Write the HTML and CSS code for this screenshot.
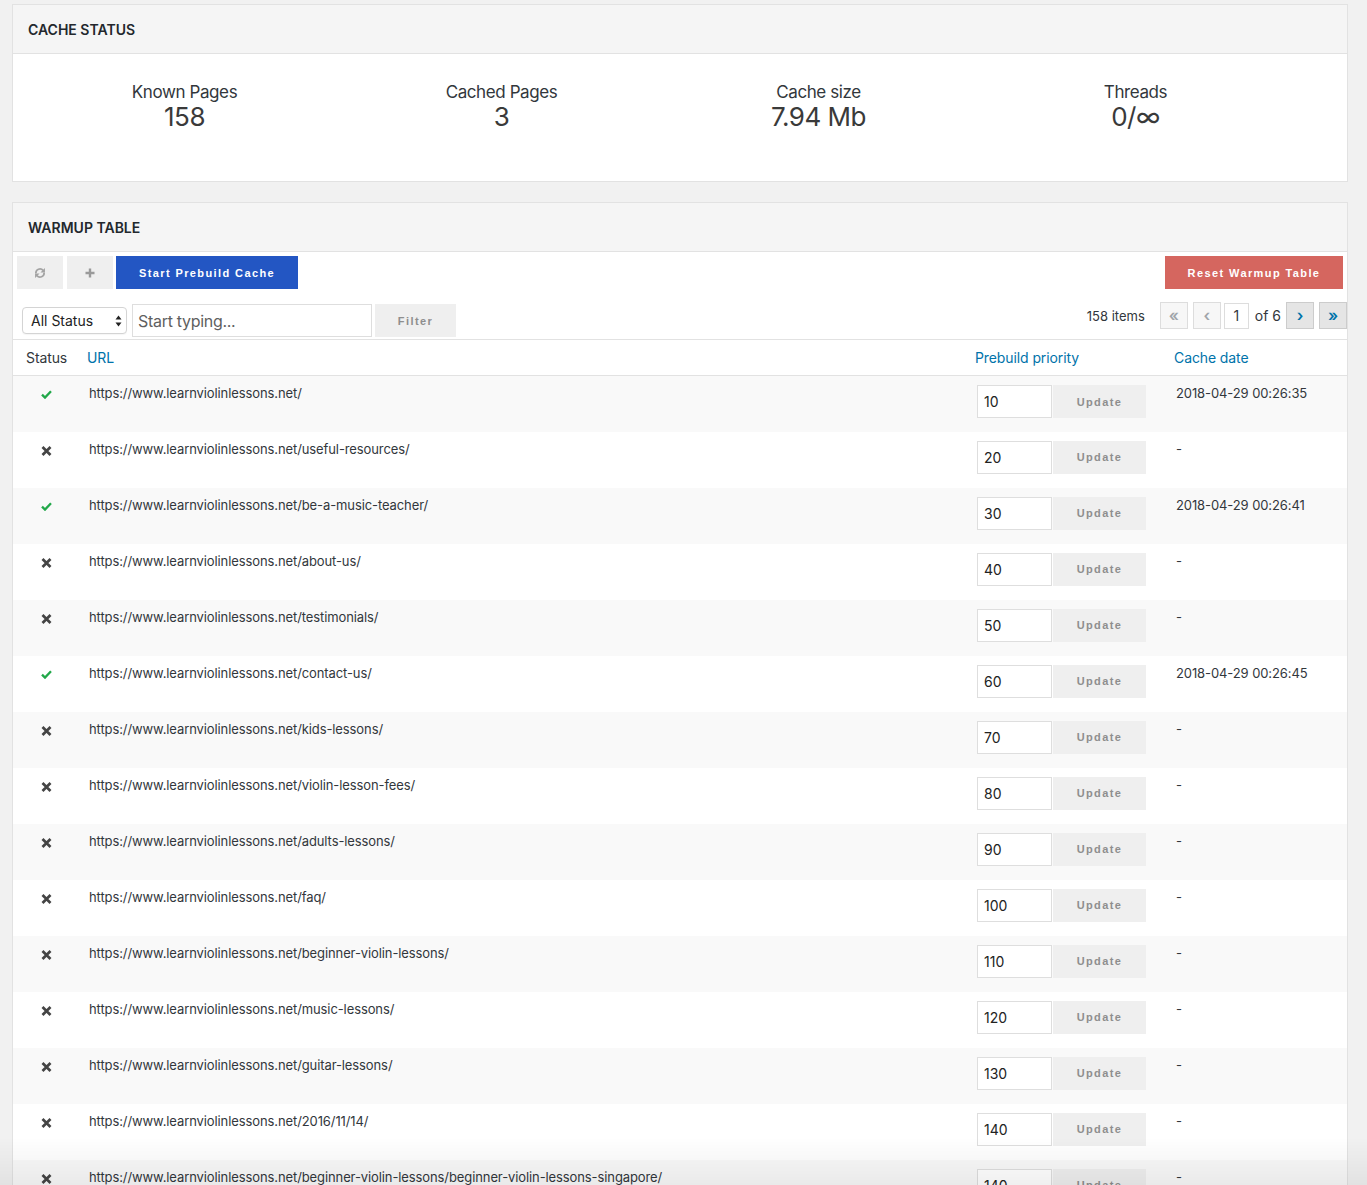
FILE: index.html
```html
<!DOCTYPE html>
<html lang="en">
<head>
    <meta charset="UTF-8">
    <meta name="viewport" content="width=device-width, initial-scale=1.0">
    <title>Cache Warmup</title>
    <link rel="stylesheet" href="styles.css">
</head>
<body>
    <div class="panel">
        <div class="panel-head">Cache Status</div>
        <div class="stats">
            <div class="stat">
                <div class="stat-label">Known Pages</div>
                <div class="stat-value">158</div>
            </div>
            <div class="stat">
                <div class="stat-label">Cached Pages</div>
                <div class="stat-value">3</div>
            </div>
            <div class="stat">
                <div class="stat-label">Cache size</div>
                <div class="stat-value">7.94 Mb</div>
            </div>
            <div class="stat">
                <div class="stat-label">Threads</div>
                <div class="stat-value">0/&infin;</div>
            </div>
        </div>
    </div>

    <div class="panel">
        <div class="panel-head">Warmup Table</div>

        <div class="toolbar">
            <div class="btn-group">
                <button class="icon-btn" title="Refresh">
                    <svg width="12" height="12" viewBox="0 0 16 16">
                        <path d="M2.6 8.6a5.4 5.4 0 0 1 9.6-4" fill="none" stroke="#a3a3a3" stroke-width="2.4"/>
                        <path d="M14.6 1.2v6h-6z" fill="#a3a3a3"/>
                        <path d="M13.4 7.4a5.4 5.4 0 0 1-9.6 4" fill="none" stroke="#a3a3a3" stroke-width="2.4"/>
                        <path d="M1.4 14.8v-6h6z" fill="#a3a3a3"/>
                    </svg>
                </button>
                <button class="icon-btn plus-btn" title="Add">
                    <svg width="10" height="10" viewBox="0 0 10 10">
                        <path d="M5 0.5v9M0.5 5h9" stroke="#9a9a9a" stroke-width="2.4"/>
                    </svg>
                </button>
                <button class="btn btn-primary">Start Prebuild Cache</button>
            </div>
            <button class="btn btn-danger">Reset Warmup Table</button>
        </div>

        <div class="filter-row">
            <div class="filters">
                <div class="select-wrap">
                    <select class="status-select">
                        <option>All Status</option>
                        <option>Cached</option>
                        <option>Not cached</option>
                    </select>
                    <svg class="select-arrows" width="7" height="12" viewBox="0 0 7 12">
                        <path d="M3.5 0.5L6.5 4.5H0.5z M3.5 11.5L6.5 7.5H0.5z" fill="#222"/>
                    </svg>
                </div>
                <input class="search" type="text" placeholder="Start typing...">
                <button class="btn btn-light filter-btn">Filter</button>
            </div>
            <div class="pager">
                <span class="items">158 items</span>
                <span class="page-btn disabled">&laquo;</span>
                <span class="page-btn disabled">&lsaquo;</span>
                <input class="page-input" type="text" value="1">
                <span class="of">of 6</span>
                <span class="page-btn">&rsaquo;</span>
                <span class="page-btn">&raquo;</span>
            </div>
        </div>

        <table class="warmup">
            <colgroup>
                <col class="col-status">
                <col class="col-url">
                <col class="col-priority">
                <col class="col-date">
            </colgroup>
            <thead>
                <tr>
                    <th class="th-status">Status</th>
                    <th><a href="#">URL</a></th>
                    <th><a href="#">Prebuild priority</a></th>
                    <th><a href="#">Cache date</a></th>
                </tr>
            </thead>
            <tbody id="rows"></tbody>
        </table>
    </div>

    <script>
        const base = 'https://www.learnviolinlessons.net/';
        const pages = [
            ['', true, '2018-04-29 00:26:35'],
            ['useful-resources/', false],
            ['be-a-music-teacher/', true, '2018-04-29 00:26:41'],
            ['about-us/', false],
            ['testimonials/', false],
            ['contact-us/', true, '2018-04-29 00:26:45'],
            ['kids-lessons/', false],
            ['violin-lesson-fees/', false],
            ['adults-lessons/', false],
            ['faq/', false],
            ['beginner-violin-lessons/', false],
            ['music-lessons/', false],
            ['guitar-lessons/', false],
            ['2016/11/14/', false],
            ['beginner-violin-lessons/beginner-violin-lessons-singapore/', false]
        ];

        const checkIcon = '<svg class="status-icon" width="11" height="9" viewBox="0 0 11 9"><path d="M1 4.6l3 3L10 1.3" fill="none" stroke="#22a84a" stroke-width="2.3"/></svg>';
        const crossIcon = '<svg class="status-icon" width="11" height="10" viewBox="0 0 11 10"><path d="M1.5 1l8 8M9.5 1l-8 8" stroke="#444" stroke-width="2.7"/></svg>';

        const tbody = document.getElementById('rows');
        pages.forEach(function (p, i) {
            // priorities go up by 10, the last one repeats 140
            const priority = Math.min((i + 1) * 10, 140);
            const tr = document.createElement('tr');
            tr.innerHTML =
                '<td class="td-status">' + (p[1] ? checkIcon : crossIcon) + '</td>' +
                '<td class="td-url">' + base + p[0] + '</td>' +
                '<td class="td-priority"><input class="priority-input" type="text" value="' + priority + '"><button class="btn btn-light update-btn">Update</button></td>' +
                '<td class="td-date">' + (p[2] || '-') + '</td>';
            tbody.appendChild(tr);
        });
    </script>
</body>
</html>
```

FILE: styles.css
```css
* {
    margin: 0;
    padding: 0;
    box-sizing: border-box;
}

body {
    background: #f1f1f1;
    padding: 4px 19px 20px 12px;
    font-family: Inter, "Liberation Sans", sans-serif;
    font-size: 13px;
    color: #32373c;
}

body::after {
    content: '';
    position: fixed;
    left: 0;
    right: 0;
    bottom: 0;
    height: 48px;
    background: linear-gradient(rgba(0, 0, 0, 0), rgba(0, 0, 0, 0.06));
    pointer-events: none;
}

.panel {
    background: #fff;
    border: 1px solid #e2e2e2;
    margin-bottom: 20px;
}

.panel-head {
    height: 49px;
    display: flex;
    align-items: center;
    padding-left: 15px;
    background: #f5f5f5;
    border-bottom: 1px solid #e2e2e2;
    font-size: 14px;
    font-weight: 600;
    text-transform: uppercase;
    color: #23282d;
}

/* cache status */

.stats {
    display: grid;
    grid-template-columns: repeat(4, 317px);
    height: 127px;
    padding: 28px 0 0 13px;
    text-align: center;
}

.stat-label {
    font-size: 17px;
    line-height: 21px;
    letter-spacing: -0.4px;
    color: #32373c;
}

.stat-value {
    font-size: 26px;
    line-height: 28px;
    letter-spacing: -0.5px;
    color: #3a3a3a;
}

/* buttons */

button {
    border: none;
    outline: none;
    cursor: pointer;
}

.btn {
    height: 33px;
    font-family: "Liberation Sans", Arial, sans-serif;
    font-size: 11px;
    font-weight: bold;
    letter-spacing: 1.4px;
}

.btn-primary {
    width: 182px;
    margin-left: -1px;
    background: #2356c3;
    color: #fff;
}

.btn-danger {
    width: 178px;
    background: #d5665f;
    color: #fff;
}

.btn-light {
    background: #efefef;
    color: #8e8e8e;
}

.toolbar {
    display: flex;
    justify-content: space-between;
    padding: 4px 4px 0;
}

.btn-group {
    display: flex;
    gap: 4px;
}

.icon-btn {
    width: 46px;
    height: 33px;
    display: flex;
    align-items: center;
    justify-content: center;
    background: #efefef;
}

/* filter row */

.filter-row {
    display: flex;
    justify-content: space-between;
    align-items: flex-start;
    height: 35px;
    margin-top: 13px;
    padding-left: 9px;
}

.filters {
    display: flex;
    align-items: center;
    margin-top: 2px;
}

.select-wrap {
    position: relative;
    width: 105px;
    height: 27px;
}

.status-select {
    appearance: none;
    -webkit-appearance: none;
    width: 100%;
    height: 100%;
    padding-left: 8px;
    border: 1px solid #d4d4d4;
    border-radius: 4px;
    background: #fff;
    box-shadow: 0 1px 1px rgba(0, 0, 0, 0.04);
    font-family: Inter, "Liberation Sans", sans-serif;
    font-size: 14px;
    color: #222;
}

.select-arrows {
    position: absolute;
    right: 5px;
    top: 8px;
    pointer-events: none;
}

.search {
    width: 240px;
    height: 33px;
    margin-left: 5px;
    padding-left: 5px;
    border: 1px solid #dedede;
    font-family: Inter, "Liberation Sans", sans-serif;
    font-size: 16px;
    letter-spacing: -0.3px;
    color: #32373c;
    outline: none;
}

.search::placeholder {
    color: #5f5f5f;
}

.filter-btn {
    width: 81px;
    margin-left: 3px;
}

.pager {
    display: flex;
    align-items: center;
    height: 27px;
}

.items {
    margin-right: 15px;
    font-size: 13px;
}

.page-btn {
    width: 28px;
    height: 27px;
    display: flex;
    align-items: center;
    justify-content: center;
    margin-left: 5px;
    border: 1px solid #cccccc;
    background: #e5e5e5;
    color: #0073aa;
    font-size: 16px;
    font-weight: 600;
    line-height: 1;
    padding-bottom: 2px;
}

.page-btn.disabled {
    border-color: #dddddd;
    background: #f7f7f7;
    color: #a0a5aa;
}

.items + .page-btn {
    margin-left: 0;
}

.page-input {
    width: 25px;
    height: 26px;
    margin-left: 3px;
    border: 1px solid #dddddd;
    text-align: center;
    font-family: Inter, "Liberation Sans", sans-serif;
    font-size: 14px;
    color: #32373c;
    outline: none;
}

.of {
    margin-left: 6px;
    font-size: 14px;
}

/* table */

.warmup {
    width: 100%;
    margin-top: 2px;
    border-collapse: collapse;
    table-layout: fixed;
    border-top: 1px solid #e2e2e2;
}

.col-status { width: 66px; }
.col-priority { width: 199px; }
.col-date { width: 181px; }

.warmup th {
    height: 36px;
    padding-left: 8px;
    border-bottom: 1px solid #e2e2e2;
    text-align: left;
    font-size: 14px;
    font-weight: normal;
    letter-spacing: -0.1px;
    vertical-align: middle;
}

.warmup th.th-status {
    padding-left: 13px;
    color: #32373c;
}

.warmup th a {
    color: #0073aa;
    text-decoration: none;
}

.warmup tbody tr {
    height: 56px;
}

.warmup tbody tr:nth-child(odd) {
    background: #f9f9f9;
}

.warmup td {
    padding: 9px 10px 0;
    vertical-align: top;
    line-height: 16px;
    letter-spacing: -0.1px;
    white-space: nowrap;
}

.warmup td.td-status {
    padding: 14px 0 0;
}

.status-icon {
    display: block;
    margin: 0 auto;
}

.td-priority {
    display: flex;
}

.priority-input {
    width: 75px;
    height: 33px;
    padding-left: 6px;
    border: 1px solid #dedede;
    font-family: Inter, "Liberation Sans", sans-serif;
    font-size: 14px;
    color: #222;
    outline: none;
}

.update-btn {
    width: 93px;
    margin-left: 1px;
}
```
